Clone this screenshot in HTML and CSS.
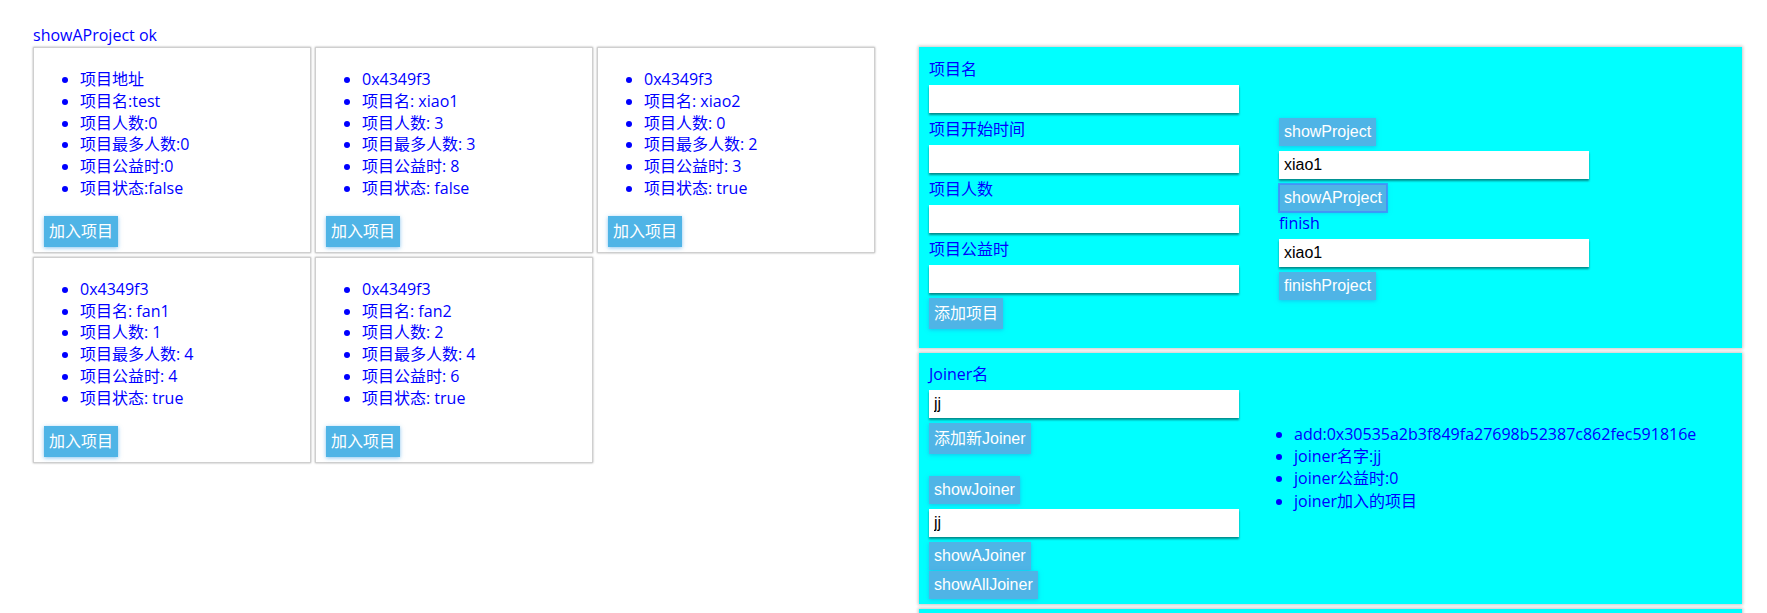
FILE: index.html
```html
<!DOCTYPE html>
<html lang="zh">
<head>
<meta charset="utf-8">
<title>Projects</title>
<link rel="stylesheet" href="styles.css">
</head>
<body>
<div class="page">
  <div class="left">
    <div class="status">showAProject ok</div>
    <div class="cards">
      <div class="card">
        <ul class="info">
          <li>项目地址</li>
          <li>项目名:test</li>
          <li>项目人数:0</li>
          <li>项目最多人数:0</li>
          <li>项目公益时:0</li>
          <li>项目状态:false</li>
        </ul>
        <button class="btn cjk card-btn">加入项目</button>
      </div>
      <div class="card">
        <ul class="info">
          <li>0x4349f3</li>
          <li>项目名: xiao1</li>
          <li>项目人数: 3</li>
          <li>项目最多人数: 3</li>
          <li>项目公益时: 8</li>
          <li>项目状态: false</li>
        </ul>
        <button class="btn cjk card-btn">加入项目</button>
      </div>
      <div class="card">
        <ul class="info">
          <li>0x4349f3</li>
          <li>项目名: xiao2</li>
          <li>项目人数: 0</li>
          <li>项目最多人数: 2</li>
          <li>项目公益时: 3</li>
          <li>项目状态: true</li>
        </ul>
        <button class="btn cjk card-btn">加入项目</button>
      </div>
      <div class="card">
        <ul class="info">
          <li>0x4349f3</li>
          <li>项目名: fan1</li>
          <li>项目人数: 1</li>
          <li>项目最多人数: 4</li>
          <li>项目公益时: 4</li>
          <li>项目状态: true</li>
        </ul>
        <button class="btn cjk card-btn">加入项目</button>
      </div>
      <div class="card">
        <ul class="info">
          <li>0x4349f3</li>
          <li>项目名: fan2</li>
          <li>项目人数: 2</li>
          <li>项目最多人数: 4</li>
          <li>项目公益时: 6</li>
          <li>项目状态: true</li>
        </ul>
        <button class="btn cjk card-btn">加入项目</button>
      </div>
    </div>
  </div>

  <div class="right">
    <div class="panel panel-project">
      <div class="col-form">
        <div class="label">项目名</div>
        <input class="field" type="text">
        <div class="label">项目开始时间</div>
        <input class="field" type="text">
        <div class="label">项目人数</div>
        <input class="field" type="text">
        <div class="label">项目公益时</div>
        <input class="field" type="text">
        <button class="btn cjk">添加项目</button>
      </div>
      <div class="col-side side-project">
        <button class="btn">showProject</button>
        <input class="field" type="text" value="xiao1">
        <button class="btn focused">showAProject</button>
        <div class="label">finish</div>
        <input class="field" type="text" value="xiao1">
        <button class="btn">finishProject</button>
      </div>
    </div>

    <div class="panel panel-joiner">
      <div class="col-form">
        <div class="label">Joiner名</div>
        <input class="field" type="text" value="jj">
        <button class="btn cjk">添加新Joiner</button>
        <div class="spacer"></div>
        <button class="btn">showJoiner</button>
        <input class="field" type="text" value="jj">
        <button class="btn">showAJoiner</button>
        <button class="btn stacked">showAllJoiner</button>
      </div>
      <div class="col-side">
        <ul class="joiner-info">
          <li>add:0x30535a2b3f849fa27698b52387c862fec591816e</li>
          <li>joiner名字:jj</li>
          <li>joiner公益时:0</li>
          <li>joiner加入的项目</li>
        </ul>
      </div>
    </div>

    <div class="panel panel-more"></div>
  </div>
</div>
</body>
</html>
```

FILE: styles.css
```css
html {
  overflow: hidden;
}

body {
  margin: 0;
  background: #ffffff;
  font-family: "Open Sans", "Noto Sans CJK SC", sans-serif;
  font-size: 16px;
  line-height: 21.8px;
  color: #0000ff;
}

.page {
  display: flex;
  align-items: flex-start;
}

.left {
  margin-left: 33px;
  width: 842px;
  padding-top: 25px;
}

.status {
  height: 22px;
}

.cards {
  display: flex;
  flex-wrap: wrap;
  gap: 4px;
}

.card {
  box-sizing: border-box;
  width: 278px;
  padding: 5px;
  background: #ffffff;
  border: 1px solid #cfcfcf;
  box-shadow: 0 0 2px rgba(0, 0, 0, 0.35);
}

.info {
  margin: 16px 0;
  padding-left: 41px;
}

.btn {
  display: inline-block;
  border: none;
  margin: 0;
  padding: 5px;
  background: #4fb4e6;
  color: #ffffff;
  font-family: "Liberation Sans", "Noto Sans CJK SC", sans-serif;
  font-size: 16px;
  line-height: 18px;
  box-shadow: 0 1px 4px rgba(40, 150, 225, 0.55);
  cursor: pointer;
}

.btn.cjk {
  line-height: 21px;
}

.card-btn {
  margin-left: 5px;
}

.focused {
  outline: 2px solid rgba(70, 130, 250, 0.7);
  outline-offset: -1px;
}

.right {
  margin-left: 44px;
  width: 823px;
  padding-top: 47px;
}

.panel {
  display: flex;
  box-sizing: border-box;
  background: #00ffff;
  padding: 10px;
  margin-bottom: 5px;
  box-shadow: 0 0 3px 1px rgba(0, 0, 0, 0.22);
}

.panel-project {
  padding-top: 11px;
  padding-bottom: 19px;
}

.panel-joiner {
  padding-top: 10px;
  padding-bottom: 5px;
}

.panel-more {
  height: 80px;
}

.col-form {
  width: 350px;
  display: flex;
  flex-direction: column;
  align-items: flex-start;
}

.col-side {
  flex: 1;
  display: flex;
  flex-direction: column;
  align-items: flex-start;
}

.side-project {
  padding-top: 60px;
}

.label {
  height: 22px;
  line-height: 22px;
}

.field {
  box-sizing: border-box;
  display: block;
  width: 310px;
  height: 28px;
  margin: 5px 0;
  padding: 0 5px;
  border: none;
  background: #ffffff;
  font-family: "Liberation Sans", sans-serif;
  font-size: 16px;
  color: #000000;
  box-shadow: 0 2px 2px rgba(0, 0, 0, 0.45);
}

.spacer {
  height: 22px;
}

.stacked {
  margin-top: 1px;
}

.joiner-info {
  margin: 60px 0 0 0;
  padding-left: 15px;
  line-height: 22.2px;
}
```
